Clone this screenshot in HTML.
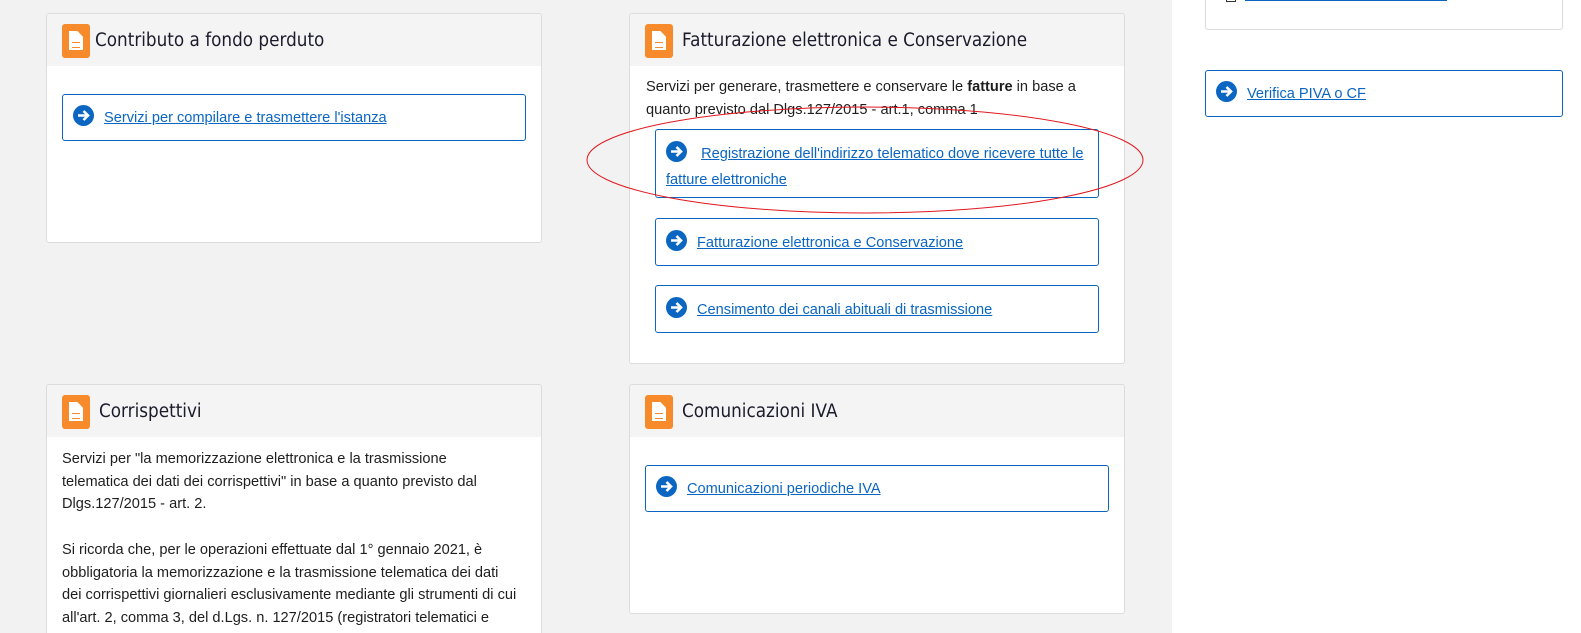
<!DOCTYPE html>
<html><head><meta charset="utf-8"><style>
*{box-sizing:border-box;margin:0;padding:0}
html,body{width:1581px;height:633px;overflow:hidden}
body{background:#fff;font-family:"Liberation Sans",sans-serif;position:relative}
.bg{position:absolute;left:0;top:0;width:1172px;height:633px;background:#f2f2f2}
.card{position:absolute;background:#fff;border:1px solid #dcdcdc;border-radius:3px;overflow:hidden}
.hd{height:52px;background:#f4f4f4;position:relative}
.ic{position:absolute;left:15px;top:10px;width:28px;height:34px;background:#f78a2a;border-radius:3px}
.ic:before{content:"";position:absolute;left:7px;top:7px;width:14px;height:19px;background:#fff;clip-path:polygon(0 0,60% 0,100% 30%,100% 100%,0 100%)}
.ic:after{content:"";position:absolute;left:10px;top:18px;width:8px;height:4px;border-top:1.5px solid #f78a2a;border-bottom:1.5px solid #f78a2a}
.tt{position:absolute;left:48px;top:16px;font-size:18.5px;color:#1b1b2b;font-family:"DejaVu Sans","Liberation Sans",sans-serif;transform:scaleX(0.91);transform-origin:0 0;white-space:nowrap}
.txt{font-size:14.6px;line-height:22.7px;color:#1e1e1e}
.btn{position:absolute;border:1px solid #0b66c2;border-radius:3px;background:#fff;font-size:14.6px;line-height:24px;color:#0a66c2}
.btn a{color:#0a66c2;text-decoration:underline}
.ar{display:inline-block;width:21px;height:21px;border-radius:50%;background:#0b66c2;position:relative;vertical-align:-4px;margin-right:10px}
.ar svg{position:absolute;left:0;top:0}
</style></head><body>
<div class="bg"></div>

<div class="card" style="left:46px;top:13px;width:496px;height:230px">
 <div class="hd"><div class="ic"></div><div class="tt">Contributo a fondo perduto</div></div>
</div>
<div class="btn" style="left:62px;top:94px;width:464px;height:47px;padding:10px 0 0 10px"><span class="ar"><svg width="21" height="21"><path d="M5 10.5H14.5M10.5 6L15 10.5L10.5 15" stroke="#fff" stroke-width="2.6" fill="none"/></svg></span><a>Servizi per compilare e trasmettere l'istanza</a></div>

<div class="card" style="left:629px;top:13px;width:496px;height:351px">
 <div class="hd"><div class="ic"></div><div class="tt" style="left:52px">Fatturazione elettronica e Conservazione</div></div>
 <div class="txt" style="padding:10px 16px 0 16px">Servizi per generare, trasmettere e conservare le <b>fatture</b> in base a quanto previsto dal Dlgs.127/2015 - art.1, comma 1</div>
</div>
<div class="btn" style="left:655px;top:129px;width:444px;height:69px;padding:11px 10px 0 10px;line-height:26px"><span class="ar"><svg width="21" height="21"><path d="M5 10.5H14.5M10.5 6L15 10.5L10.5 15" stroke="#fff" stroke-width="2.6" fill="none"/></svg></span> <a>Registrazione dell'indirizzo telematico dove ricevere tutte le fatture elettroniche</a></div>
<div class="btn" style="left:655px;top:218px;width:444px;height:48px;padding:11px 0 0 10px"><span class="ar"><svg width="21" height="21"><path d="M5 10.5H14.5M10.5 6L15 10.5L10.5 15" stroke="#fff" stroke-width="2.6" fill="none"/></svg></span><a>Fatturazione elettronica e Conservazione</a></div>
<div class="btn" style="left:655px;top:285px;width:444px;height:48px;padding:11px 0 0 10px"><span class="ar"><svg width="21" height="21"><path d="M5 10.5H14.5M10.5 6L15 10.5L10.5 15" stroke="#fff" stroke-width="2.6" fill="none"/></svg></span><a>Censimento dei canali abituali di trasmissione</a></div>

<div class="card" style="left:46px;top:384px;width:496px;height:249px;border-bottom:none;border-radius:3px 3px 0 0">
 <div class="hd"><div class="ic"></div><div class="tt" style="left:52px">Corrispettivi</div></div>
 <div class="txt" style="padding:11px 0 0 15px;white-space:nowrap">Servizi per "la memorizzazione elettronica e la trasmissione<br>telematica dei dati dei corrispettivi" in base a quanto previsto dal<br>Dlgs.127/2015 - art. 2.<br><br>Si ricorda che, per le operazioni effettuate dal 1° gennaio 2021, è<br>obbligatoria la memorizzazione e la trasmissione telematica dei dati<br>dei corrispettivi giornalieri esclusivamente mediante gli strumenti di cui<br>all'art. 2, comma 3, del d.Lgs. n. 127/2015 (registratori telematici e</div>
</div>

<div class="card" style="left:629px;top:384px;width:496px;height:230px">
 <div class="hd"><div class="ic"></div><div class="tt" style="left:52px">Comunicazioni IVA</div></div>
</div>
<div class="btn" style="left:645px;top:465px;width:464px;height:47px;padding:10px 0 0 10px"><span class="ar"><svg width="21" height="21"><path d="M5 10.5H14.5M10.5 6L15 10.5L10.5 15" stroke="#fff" stroke-width="2.6" fill="none"/></svg></span><a>Comunicazioni periodiche IVA</a></div>

<div class="card" style="left:1205px;top:-10px;width:358px;height:40px"></div>
<div style="position:absolute;left:1226px;top:-6px;width:10px;height:8px;border:1px solid #333"></div>
<div style="position:absolute;left:1245px;top:0;width:202px;height:1px;background:#0a66c2"></div>
<div class="btn" style="left:1205px;top:70px;width:358px;height:47px;padding:10px 0 0 10px"><span class="ar"><svg width="21" height="21"><path d="M5 10.5H14.5M10.5 6L15 10.5L10.5 15" stroke="#fff" stroke-width="2.6" fill="none"/></svg></span><a>Verifica PIVA o CF</a></div>

<svg style="position:absolute;left:0;top:0" width="1581" height="633"><ellipse cx="865" cy="160" rx="278" ry="53" fill="none" stroke="#e0191f" stroke-width="1"/></svg>
</body></html>
